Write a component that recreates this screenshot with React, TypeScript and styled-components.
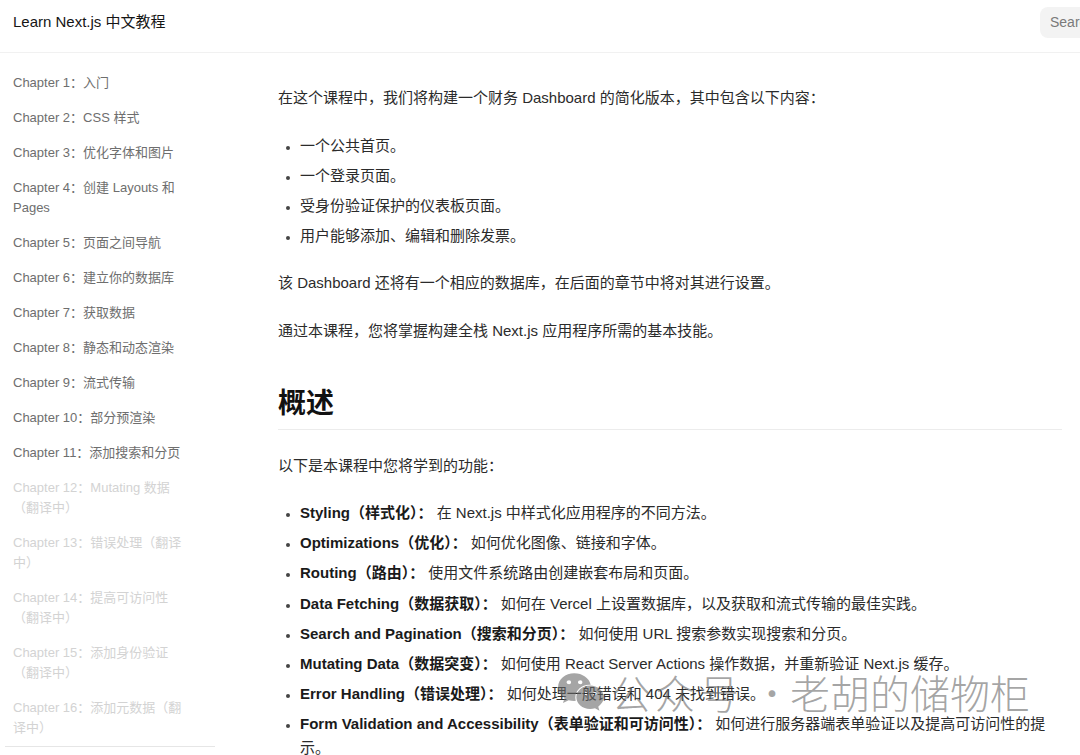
import React from "react";
import styled, { createGlobalStyle } from "styled-components";
import { FaWeixin } from "react-icons/fa";

const GlobalStyle = createGlobalStyle`
  html, body {
    margin: 0;
    padding: 0;
    background: #ffffff;
    overflow: hidden;
  }
  body {
    font-family: "Liberation Sans", "Noto Sans CJK SC", sans-serif;
    color: #2b2b2b;
    -webkit-font-smoothing: antialiased;
  }
  * { box-sizing: border-box; }
`;

const Page = styled.div`
  position: relative;
  width: 100%;
  height: 100vh;
  overflow: hidden;
  display: flex;
  flex-direction: column;
`;

const Header = styled.header`
  height: 53px;
  flex-shrink: 0;
  display: flex;
  align-items: center;
  padding: 0 0 8px 13px;
  border-bottom: 1px solid #f1f1f1;
  overflow: hidden;
`;

const SiteTitle = styled.div`
  font-size: 15px;
  line-height: 20px;
  color: #151515;
  flex: 1;
`;

const SearchBox = styled.div`
  width: 200px;
  height: 31px;
  margin-right: -160px;
  flex-shrink: 0;
  border-radius: 8px;
  background: #f3f3f3;
  padding: 0 10px;
  display: flex;
  align-items: center;
  font-size: 14px;
  color: #7a7a7a;
`;

const Body = styled.div`
  display: flex;
  flex: 1;
  min-height: 0;
`;

const Sidebar = styled.aside`
  width: 215px;
  flex-shrink: 0;
  display: flex;
  flex-direction: column;
  padding-top: 20px;
`;

const NavList = styled.nav`
  display: flex;
  flex-direction: column;
  gap: 15px;
`;

const NavItem = styled.a<{ $pending?: boolean }>`
  display: block;
  padding: 0 27px 0 13px;
  font-size: 13px;
  line-height: 20px;
  color: ${(p) => (p.$pending ? "#d3d3d3" : "#6e6e6e")};
  text-decoration: none;
`;

const SidebarDivider = styled.hr`
  margin: 8px 0 0 5px;
  width: 210px;
  border: none;
  border-top: 1px solid #e6e6e6;
`;

const Main = styled.main`
  flex: 1;
  padding: 33px 0 0 63px;
`;

const Article = styled.article`
  width: 784px;
`;

const Paragraph = styled.p`
  margin: 0 0 23.5px;
  font-size: 15px;
  line-height: 24px;
  color: #2b2b2b;
`;

const List = styled.ul`
  margin: 0 0 23px;
  padding-left: 22px;
  list-style: disc;
`;

const ListItem = styled.li`
  font-size: 15px;
  line-height: 24px;
  color: #2b2b2b;
  & + & {
    margin-top: 6.2px;
  }
  &::marker {
    font-size: 12px;
    color: #444;
  }
`;

const Term = styled.strong`
  font-weight: 700;
  color: #1a1a1a;
`;

const SectionTitle = styled.h2`
  margin: 43px 0 24px;
  padding-bottom: 7px;
  font-size: 28px;
  line-height: 36px;
  font-weight: 700;
  color: #111111;
  border-bottom: 1px solid #ececec;
`;

const Watermark = styled.div`
  position: absolute;
  left: 557px;
  top: 664px;
  display: flex;
  align-items: center;
  pointer-events: none;
  color: rgba(105, 105, 105, 0.6);
`;

const WatermarkIcon = styled.span`
  display: flex;
  margin-right: 6px;
`;

const WatermarkText = styled.span<{ $spacing: number }>`
  font-family: "Noto Sans CJK SC", sans-serif;
  font-size: 40px;
  font-weight: 300;
  line-height: 56px;
  letter-spacing: ${(p) => p.$spacing}px;
  white-space: pre;
`;

const WatermarkDot = styled.span`
  font-family: "Noto Sans CJK SC", sans-serif;
  font-size: 36px;
  font-weight: 300;
  line-height: 56px;
  margin: 0 0 0 11px;
`;

const chapters: { label: string; pending?: boolean }[] = [
  { label: "Chapter 1：入门" },
  { label: "Chapter 2：CSS 样式" },
  { label: "Chapter 3：优化字体和图片" },
  { label: "Chapter 4：创建 Layouts 和 Pages" },
  { label: "Chapter 5：页面之间导航" },
  { label: "Chapter 6：建立你的数据库" },
  { label: "Chapter 7：获取数据" },
  { label: "Chapter 8：静态和动态渲染" },
  { label: "Chapter 9：流式传输" },
  { label: "Chapter 10：部分预渲染" },
  { label: "Chapter 11：添加搜索和分页" },
  { label: "Chapter 12：Mutating 数据（翻译中）", pending: true },
  { label: "Chapter 13：错误处理（翻译中）", pending: true },
  { label: "Chapter 14：提高可访问性（翻译中）", pending: true },
  { label: "Chapter 15：添加身份验证（翻译中）", pending: true },
  { label: "Chapter 16：添加元数据（翻译中）", pending: true },
];

const features: [string, string][] = [
  ["Styling（样式化）：", "在 Next.js 中样式化应用程序的不同方法。"],
  ["Optimizations（优化）：", "如何优化图像、链接和字体。"],
  ["Routing（路由）：", "使用文件系统路由创建嵌套布局和页面。"],
  ["Data Fetching（数据获取）：", "如何在 Vercel 上设置数据库，以及获取和流式传输的最佳实践。"],
  ["Search and Pagination（搜索和分页）：", "如何使用 URL 搜索参数实现搜索和分页。"],
  ["Mutating Data（数据突变）：", "如何使用 React Server Actions 操作数据，并重新验证 Next.js 缓存。"],
  ["Error Handling（错误处理）：", "如何处理一般错误和 404 未找到错误。"],
  ["Form Validation and Accessibility（表单验证和可访问性）：", "如何进行服务器端表单验证以及提高可访问性的提示。"],
];

export default function App() {
  return (
    <Page>
      <GlobalStyle />
      <Header>
        <SiteTitle>Learn Next.js 中文教程</SiteTitle>
        <SearchBox>Search documentation…</SearchBox>
      </Header>
      <Body>
        <Sidebar>
          <NavList>
            {chapters.map((c) => (
              <NavItem key={c.label} href="#" $pending={c.pending}>
                {c.label}
              </NavItem>
            ))}
          </NavList>
          <SidebarDivider />
        </Sidebar>
        <Main>
          <Article>
            <Paragraph>
              在这个课程中，我们将构建一个财务 Dashboard 的简化版本，其中包含以下内容：
            </Paragraph>
            <List>
              <ListItem>一个公共首页。</ListItem>
              <ListItem>一个登录页面。</ListItem>
              <ListItem>受身份验证保护的仪表板页面。</ListItem>
              <ListItem>用户能够添加、编辑和删除发票。</ListItem>
            </List>
            <Paragraph>该 Dashboard 还将有一个相应的数据库，在后面的章节中将对其进行设置。</Paragraph>
            <Paragraph>通过本课程，您将掌握构建全栈 Next.js 应用程序所需的基本技能。</Paragraph>
            <SectionTitle>概述</SectionTitle>
            <Paragraph>以下是本课程中您将学到的功能：</Paragraph>
            <List>
              {features.map(([term, desc]) => (
                <ListItem key={term}>
                  <Term>{term}</Term> {desc}
                </ListItem>
              ))}
            </List>
          </Article>
        </Main>
      </Body>
      <Watermark>
        <WatermarkIcon>
          <FaWeixin size={48} />
        </WatermarkIcon>
        <WatermarkText $spacing={4}>公众号</WatermarkText>
        <WatermarkDot>·</WatermarkDot>
        <WatermarkText $spacing={0}>老胡的储物柜</WatermarkText>
      </Watermark>
    </Page>
  );
}
